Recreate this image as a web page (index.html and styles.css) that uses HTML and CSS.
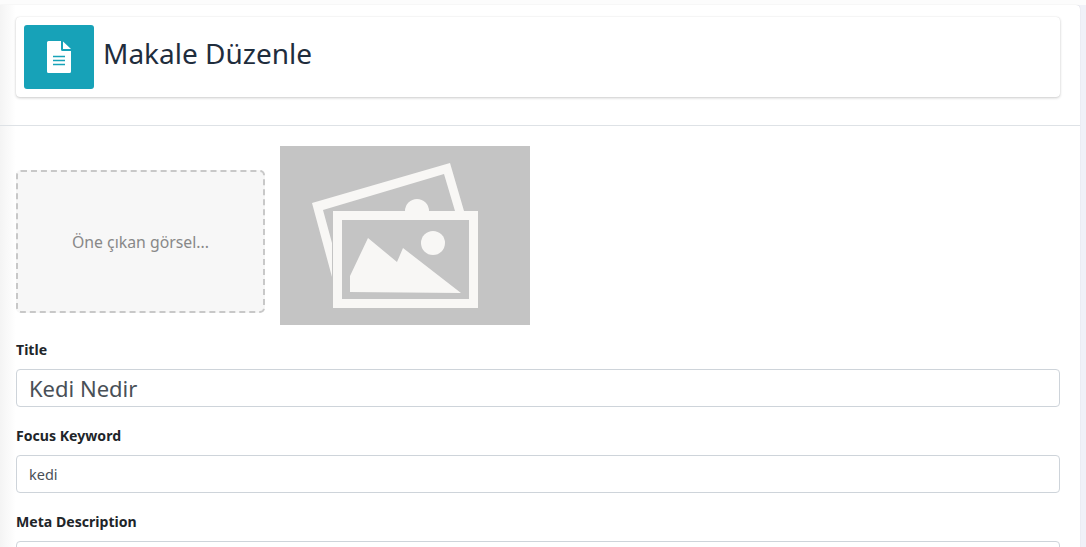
FILE: index.html
```html
<!DOCTYPE html>
<html lang="tr">
<head>
<meta charset="utf-8">
<title>Makale Düzenle</title>
<link rel="stylesheet" href="styles.css">
</head>
<body>
<div class="page">
  <main class="panel">
    <header class="panel-head">
      <div class="title-card">
        <div class="title-icon">
          <svg width="24" height="32" viewBox="0 0 24 32">
            <path d="M0 1.5Q0 0 1.5 0H14V8.5Q14 10 15.5 10H24V30.5Q24 32 22.5 32H1.5Q0 32 0 30.5Z" fill="#fff"/>
            <path d="M16 0.5L24 8H16Z" fill="#fff"/>
            <path d="M6 15.5H18M6 19.5H18M6 23.5H18" stroke="#17a2b8" stroke-width="1.4" fill="none"/>
          </svg>
        </div>
        <h1 class="title-text">Makale Düzenle</h1>
      </div>
    </header>
    <section class="panel-body">
      <div class="media-row">
        <div class="dropzone">Öne çıkan görsel...</div>
        <div class="preview">
          <svg width="250" height="179" viewBox="0 0 250 179">
            <rect width="250" height="179" fill="#c4c4c4"/>
            <path d="M32 57L170 17L184 65H175L164 28L43 64L52 97V131Z" fill="#f8f7f5"/>
            <path d="M125 65A12 12 0 1 1 149 65Z" fill="#f8f7f5"/>
            <rect x="57.5" y="69.5" width="136" height="88" fill="#c4c4c4" stroke="#f8f7f5" stroke-width="9"/>
            <circle cx="153" cy="97" r="12" fill="#f8f7f5"/>
            <path d="M70 130L88 92L117 116L123 102L181 147L70 146Z" fill="#f8f7f5"/>
          </svg>
        </div>
      </div>
      <div class="field">
        <label class="field-label" for="title">Title</label>
        <input class="field-input field-input-lg" id="title" value="Kedi Nedir">
      </div>
      <div class="field">
        <label class="field-label" for="keyword">Focus Keyword</label>
        <input class="field-input" id="keyword" value="kedi">
      </div>
      <div class="field">
        <label class="field-label" for="meta">Meta Description</label>
        <input class="field-input" id="meta">
      </div>
    </section>
  </main>
</div>
</body>
</html>
```
FILE: styles.css
```css
* { box-sizing: border-box; }
html, body { margin: 0; height: 100%; overflow: hidden; }
body {
  background: #f4f6f9;
  font-family: "Noto Sans", "Open Sans", sans-serif;
  color: #212529;
}
.page {
  height: 547px;
  overflow: hidden;
  padding: 5px 6px 0 0;
  background: linear-gradient(#fcfcfc 5px, #f0f1f8 5px);
}
.panel {
  background: #fff;
  background-image: linear-gradient(to right, #f4f4f4, #fff 16px);
  border-top-right-radius: 4px;
  box-shadow: 0 0 1px rgba(0,0,0,.2);
  height: 600px;
}
.panel-head { padding: 12px 20px 28px 16px; border-bottom: 1px solid #dee2e6; }
.title-card {
  display: flex;
  align-items: center;
  gap: 9px;
  height: 80px;
  padding: 8px;
  background: #fff;
  border-radius: 4px;
  box-shadow: 0 0 1px rgba(0,0,0,.125), 0 1px 3px rgba(0,0,0,.2);
}
.title-icon {
  width: 70px;
  height: 64px;
  display: flex;
  align-items: center;
  justify-content: center;
  background: #17a2b8;
  border-radius: 3px;
}
.title-text { margin: 0 0 7px; font-size: 28px; font-weight: 400; line-height: 1.2; color: #1f2d3d; }
.panel-body { padding: 20px 20px 0 16px; }
.media-row { display: flex; gap: 15px; align-items: flex-start; margin-bottom: 16px; }
.dropzone {
  width: 249px;
  height: 143px;
  margin-top: 24px;
  display: flex;
  align-items: center;
  justify-content: center;
  background: #f7f7f7;
  border: 2px dashed #c8c8c8;
  border-radius: 5px;
  color: #888;
  font-size: 15.8px;
}
.preview { width: 250px; height: 179px; }
.preview svg { display: block; }
.field { margin-bottom: 20px; }
.field-label { display: block; margin-bottom: 10px; font-size: 14.1px; font-weight: 700; line-height: 18px; }
.field-input {
  display: block;
  width: 100%;
  height: 38px;
  padding: 6px 12px;
  background: #fff;
  border: 1px solid #ced4da;
  border-radius: 4px;
  color: #495057;
  font-family: inherit;
  font-size: 14.5px;
}
.field-input-lg { font-size: 22px; }
```
